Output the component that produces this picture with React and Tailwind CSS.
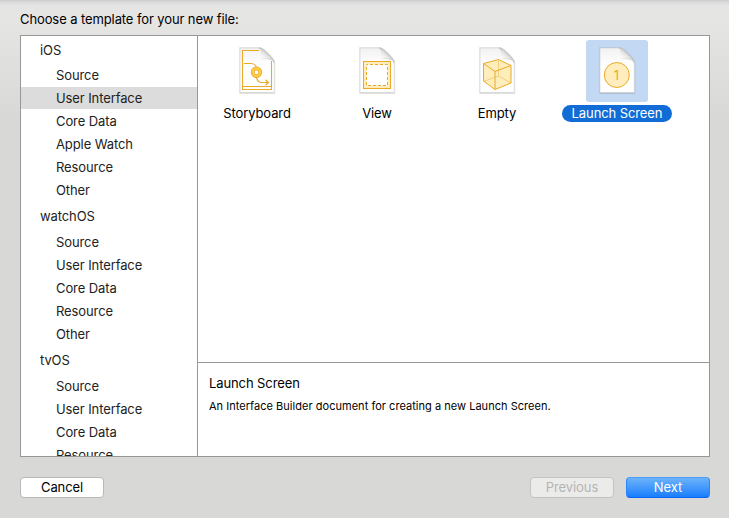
import React from "react";

const groups = [
  { name: "iOS", items: ["Source", "User Interface", "Core Data", "Apple Watch", "Resource", "Other"] },
  { name: "watchOS", items: ["Source", "User Interface", "Core Data", "Resource", "Other"] },
  { name: "tvOS", items: ["Source", "User Interface", "Core Data", "Resource"] },
];

function Page({ id, children }) {
  return (
    <svg width="40" height="52" viewBox="0 0 40 52" fill="none" className="shrink-0">
      <defs>
        <linearGradient id={`page-${id}`} x1="0" y1="0" x2="0" y2="1">
          <stop offset="0" stopColor="#f2f2f2" />
          <stop offset="0.4" stopColor="#ffffff" />
        </linearGradient>
        <linearGradient id={`fold-${id}`} x1="0" y1="1" x2="1" y2="0">
          <stop offset="0" stopColor="#ffffff" />
          <stop offset="0.5" stopColor="#e2e2e2" />
        </linearGradient>
      </defs>
      <path d="M3 2H23C26 2 37.3 13 37.3 17V47H3Z" stroke="#000" strokeOpacity="0.07" strokeWidth="2.2" />
      <path d="M3 46.9H37.3" stroke="#000" strokeOpacity="0.14" />
      <path d="M3 2H23C26 2 37.3 13 37.3 17V46.5H3Z" fill={`url(#page-${id})`} stroke="#cfcfcf" strokeWidth="0.6" />
      {children}
      <path d="M21 2H23C26 2 37.3 13 37.3 17C35.5 13.8 31 12.8 25 13.2C25.2 8 24.5 4 21 2Z" fill="#d6d6d6" />
      <path d="M24.8 4.3V12.6H33.8Z" fill={`url(#fold-${id})`} />
      <path d="M22 2H23C26 2 37.3 13 37.3 17" stroke="#b9b9b9" strokeWidth="0.8" />
    </svg>
  );
}

function StoryboardIcon() {
  return (
    <Page id="story">
      <path d="M22 4.5H5.5V43.5H34.5V15M5.5 40.5H34.5" stroke="#eaaa27" strokeWidth="1.1" />
      <path d="M7 17.5H14C17 17.5 19.5 19.5 19.5 23M19.5 29C19.5 33 20.5 36.5 24.5 36.5H31M28.5 33.7L31.4 36.5L28.5 39.3" stroke="#eaaa27" strokeWidth="1.2" />
      <circle cx="19.5" cy="26.3" r="3.8" fill="#fff" stroke="#eaaa27" strokeWidth="3.8" />
      <circle cx="19.5" cy="26.3" r="3.7" stroke="#fdcb48" strokeWidth="2.5" />
    </Page>
  );
}

function ViewIcon() {
  return (
    <Page id="view">
      <rect x="6.5" y="15.5" width="27" height="27" fill="#ffedbd" stroke="#eaaa27" />
      <rect x="9.5" y="18.5" width="21" height="21" fill="#fff" stroke="#eaaa27" strokeDasharray="3 2" strokeDashoffset="1.5" />
    </Page>
  );
}

function CubeIcon() {
  return (
    <Page id="cube">
      <path d="M6.5 17.5L21.5 13.5L34 19.5V37L18 43.5L6.5 35Z" fill="#ffedbc" />
      <path d="M6.5 35.5L21.5 30L34 37M21.5 13.5V30" stroke="#f2cf78" />
      <path d="M6.5 17.5L21.5 13.5L34 19.5V37L18 43.5L6.5 35ZM6.5 17.5L18 25.5L34 19.5M18 25.5V43.5" stroke="#eaaa27" strokeLinejoin="round" />
    </Page>
  );
}

function LaunchIcon() {
  return (
    <Page id="launch">
      <circle cx="19.8" cy="29" r="12.5" fill="#ffedbd" stroke="#eaaa27" />
      <text x="19.4" y="33.7" textAnchor="middle" fill="#eaaa27" className="font-['Inter'] text-[13px]">1</text>
    </Page>
  );
}

const templates = [
  { name: "Storyboard", Icon: StoryboardIcon },
  { name: "View", Icon: ViewIcon },
  { name: "Empty", Icon: CubeIcon },
  { name: "Launch Screen", Icon: LaunchIcon, selected: true },
];

function Template({ name, Icon, selected }) {
  return (
    <div className="flex w-[120px] flex-col items-center">
      <div className={`flex h-[62px] w-[62px] justify-center rounded-[3px] pt-1.5 ${selected ? "bg-[#c3d9f3]" : ""}`}>
        <Icon />
      </div>
      <div className={`mt-[3px] flex h-[17px] items-center justify-center rounded-full ${selected ? "w-[110px] bg-[#116cd6] text-white" : ""}`}>
        {name}
      </div>
    </div>
  );
}

export default function App() {
  return (
    <div className="flex h-[518px] w-[729px] flex-col overflow-hidden bg-[linear-gradient(to_bottom,#cecece_0px,#dedede_3px,#e5e5e4_6px,#e5e5e4_20px,#d8d8d6_120px)] pr-[19px] pl-5 font-['Inter','Liberation_Sans',sans-serif] text-[13px] leading-[17px] tracking-[-0.1px] text-black">
      <div className="h-[35px] shrink-0 pt-[11px]">Choose a template for your new file:</div>

      <div className="flex h-[422px] shrink-0 border border-[#979797] bg-white">
        <div className="w-[177px] shrink-0 overflow-hidden border-r border-[#979797] text-[#222]">
          {groups.map((group, g) => (
            <div key={group.name}>
              <div className={`flex items-center pl-[19px] ${g === 0 ? "h-7" : "h-[29px]"}`}>{group.name}</div>
              {group.items.map((item, i) => (
                <div key={item} className="h-[23px]">
                  <div className={`flex h-[22px] items-center pl-[35px] ${g === 0 && i === 1 ? "bg-[#dcdcdc]" : ""}`}>{item}</div>
                </div>
              ))}
            </div>
          ))}
        </div>

        <div className="flex min-w-0 flex-1 flex-col">
          <div className="h-[327px] shrink-0 border-b border-[#979797] pt-1">
            <div className="-ml-px flex">
              {templates.map((t) => (
                <Template key={t.name} {...t} />
              ))}
            </div>
          </div>
          <div className="px-[11px] pt-3">
            <div>Launch Screen</div>
            <div className="mt-[7px] text-[11px] leading-[14px] tracking-[0.03px]">
              An Interface Builder document for creating a new Launch Screen.
            </div>
          </div>
        </div>
      </div>

      <div className="flex pt-5">
        <button className="h-[21px] w-[84px] rounded-[4px] border border-[#b8b8b8] bg-white leading-[19px]">Cancel</button>
        <button className="ml-auto h-[21px] w-[84px] rounded-[4px] border border-[#c4c4c3] bg-[#ebebea] leading-[19px] text-[#b5b5b4]" disabled>
          Previous
        </button>
        <button className="ml-3 h-[21px] w-[84px] rounded-[4px] border border-t-[#4d9df5] border-x-[#2f84f8] border-b-[#0f62f5] bg-linear-to-b from-[#6bb3fa] to-[#147dfd] leading-[19px] text-white">
          Next
        </button>
      </div>
    </div>
  );
}
